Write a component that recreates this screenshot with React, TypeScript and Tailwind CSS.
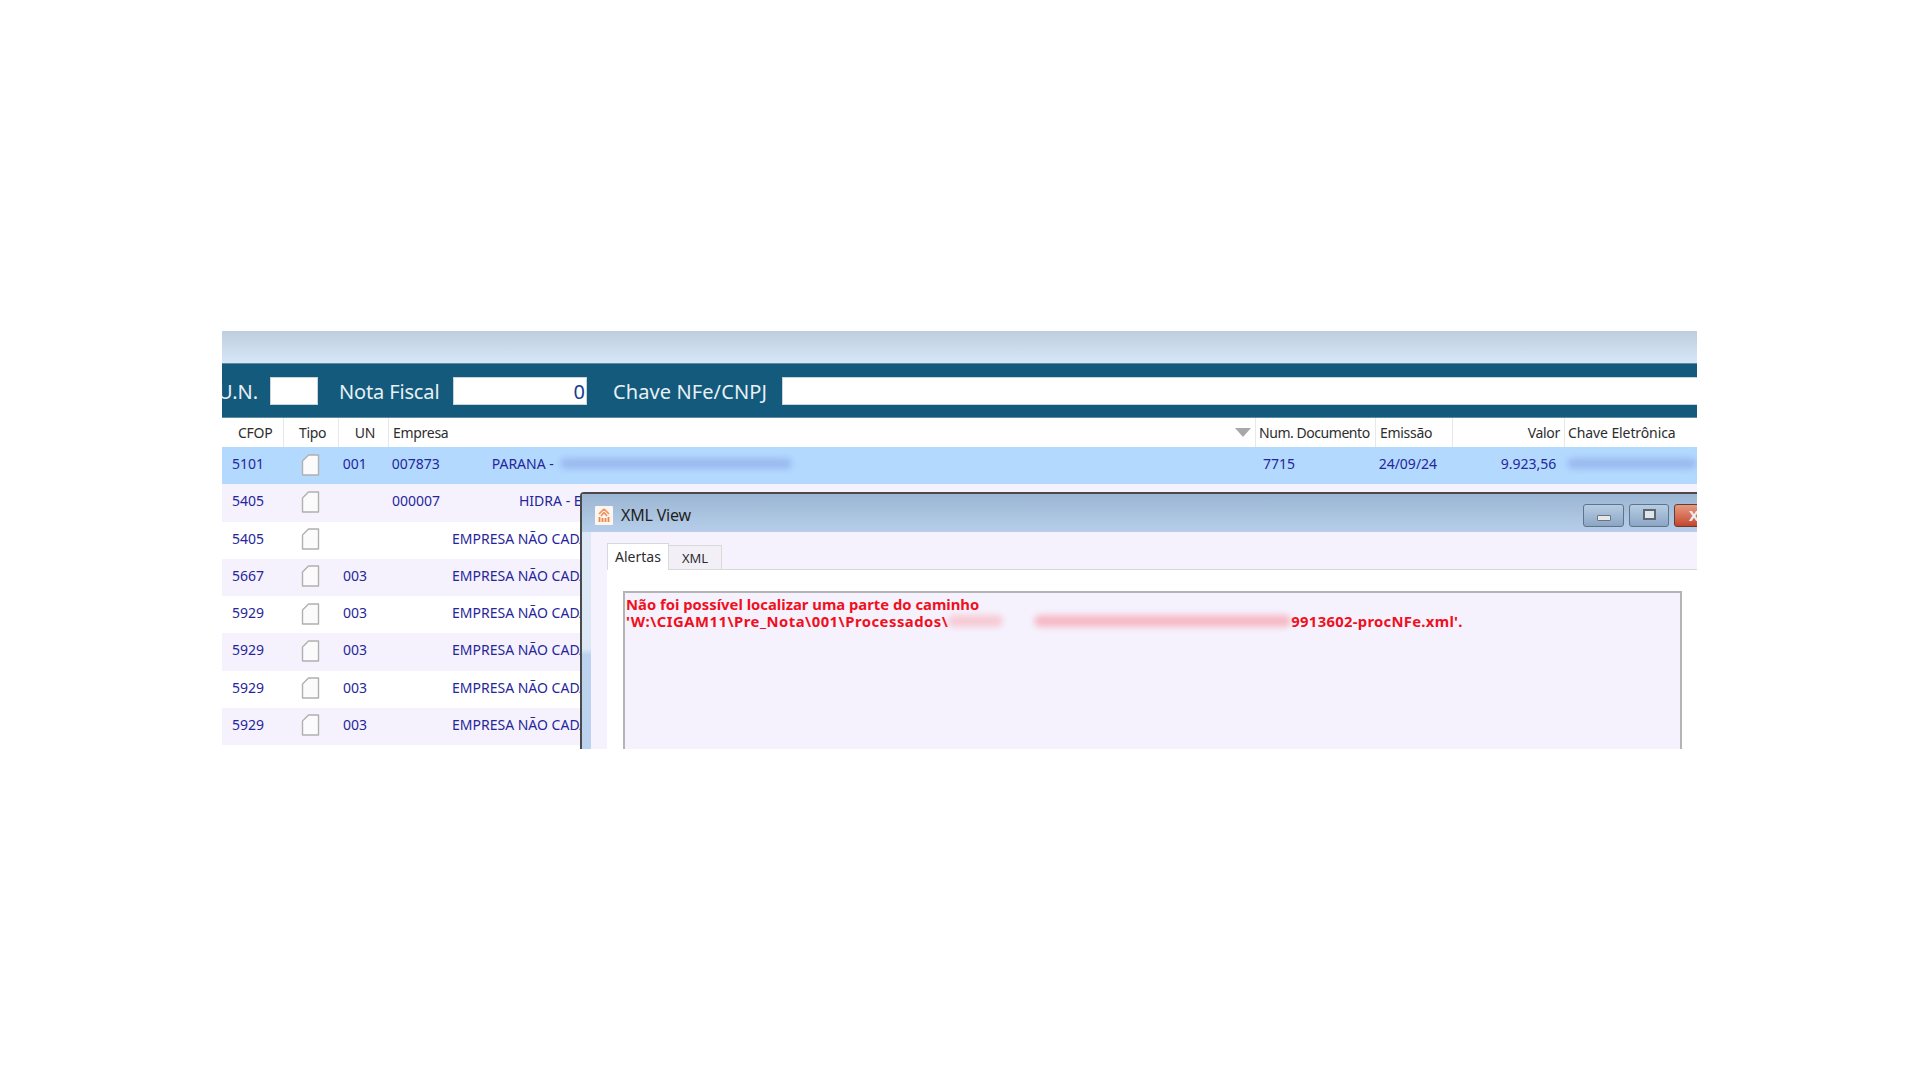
const TAHOMA = "font-['Noto_Sans',sans-serif]";

type Row = {
  cfop: string;
  un: string;
  code: string;
  name: string;
  nameClass: string;
  bg: string;
};

const rows: Row[] = [
  { cfop: "5101", un: "001", code: "007873", name: "PARANA -", nameClass: "ml-[40px]", bg: "bg-[#b3d9ff]" },
  { cfop: "5405", un: "", code: "000007", name: "HIDRA - EMPRESA", nameClass: "ml-[67px]", bg: "bg-[#f5f2fe]" },
  { cfop: "5405", un: "", code: "", name: "EMPRESA NÃO CADASTRADA", nameClass: "ml-0", bg: "bg-white" },
  { cfop: "5667", un: "003", code: "", name: "EMPRESA NÃO CADASTRADA", nameClass: "ml-0", bg: "bg-[#f5f2fe]" },
  { cfop: "5929", un: "003", code: "", name: "EMPRESA NÃO CADASTRADA", nameClass: "ml-0", bg: "bg-white" },
  { cfop: "5929", un: "003", code: "", name: "EMPRESA NÃO CADASTRADA", nameClass: "ml-0", bg: "bg-[#f5f2fe]" },
  { cfop: "5929", un: "003", code: "", name: "EMPRESA NÃO CADASTRADA", nameClass: "ml-0", bg: "bg-white" },
  { cfop: "5929", un: "003", code: "", name: "EMPRESA NÃO CADASTRADA", nameClass: "ml-0", bg: "bg-[#f5f2fe]" },
];

function DocIcon() {
  return (
    <svg width="19" height="22" viewBox="0 0 19 22" className="block">
      <path d="M7.5 1 H17.5 V21 H1.5 V7 Z" fill="#fbfbfb" stroke="#b0b0b0" strokeWidth="1.4" strokeLinejoin="round" />
    </svg>
  );
}

function Logo() {
  return (
    <svg width="18" height="19" viewBox="0 0 18 19" className="block">
      <rect width="18" height="19" rx="1" fill="#fdf6f0" />
      <path d="M9 3 L4 8 M9 3 L14 8 M9 6.5 L6 10 M9 6.5 L12 10" stroke="#f0925a" strokeWidth="1.7" fill="none" />
      <path d="M4.5 11 V16 M7.5 12 V16 M10.5 12 V16 M13.5 11 V16" stroke="#ee8447" strokeWidth="1.8" fill="none" />
    </svg>
  );
}

function HeaderCell({ className, children }: { className: string; children?: React.ReactNode }) {
  return <div className={`flex h-full items-center border-r border-[#e8e8e8] ${className}`}>{children}</div>;
}

export default function App() {
  return (
    <div className={`min-h-screen bg-white pt-[331px] pl-[222px] ${TAHOMA}`}>
      <div className="relative h-[418px] w-[1475px] overflow-hidden bg-white">
        <div className="h-[32px] bg-gradient-to-b from-[#bfcede] to-[#d6e7f9]" />
        <div className="flex h-[55px] items-center border-y border-[#5f8ba0] bg-[#135a7c] pt-[1px] text-[20px] text-[#e8f0f4]">
          <span className="-ml-[4px] w-[52px] pt-[1px] whitespace-nowrap">U.N.</span>
          <div className="h-[28px] w-[48px] border border-[#c9d3d9] bg-white" />
          <span className="ml-[21px] w-[114px] pt-[1px] tracking-[-0.15px] whitespace-nowrap">Nota Fiscal</span>
          <div className="flex h-[28px] w-[134px] items-center justify-end border border-[#c9d3d9] bg-white pt-[1px] pr-[1px] text-[#14408a]">0</div>
          <span className="ml-[26px] w-[169px] pt-[1px] tracking-[0.1px] whitespace-nowrap">Chave NFe/CNPJ</span>
          <div className="h-[28px] flex-1 border-y border-l border-[#c9d3d9] bg-white" />
        </div>

        <div className="flex h-[29px] items-center text-[14px] tracking-[-0.3px] text-[#2d2d2d]">
          <div className="h-full w-[6px]" />
          <HeaderCell className="w-[56px] pl-[10px]">CFOP</HeaderCell>
          <HeaderCell className="w-[55px] pl-[15px]">Tipo</HeaderCell>
          <HeaderCell className="w-[50px] justify-end pr-[13px]">UN</HeaderCell>
          <HeaderCell className="w-[867px] justify-between pr-[4px] pl-[4px]">
            <span>Empresa</span>
            <svg width="16" height="9" viewBox="0 0 16 9" className="block">
              <path d="M0 0 H16 L8 9 Z" fill="#a8a8a8" />
            </svg>
          </HeaderCell>
          <HeaderCell className="w-[120px] pl-[3px] tracking-[-0.45px]">Num. Documento</HeaderCell>
          <HeaderCell className="w-[77px] pl-[4px]">Emissão</HeaderCell>
          <HeaderCell className="w-[112px] justify-end pr-[4px]">Valor</HeaderCell>
          <div className="pl-[3px] tracking-[-0.1px]">Chave Eletrônica</div>
        </div>

        {rows.map((r, i) => (
          <div key={i} className={`flex h-[37.25px] items-center pb-[4px] text-[14px] text-[#26269a] ${r.bg}`}>
            <div className="w-[62px] pl-[10px]">{r.cfop}</div>
            <div className="flex w-[55px] justify-center pt-[2px] pr-[2px]">
              <DocIcon />
            </div>
            <div className="w-[50px] pl-[4px]">{r.un}</div>
            <div className="flex w-[867px] items-center overflow-hidden pl-[3px] whitespace-nowrap">
              <span className="w-[60px] shrink-0">{r.code}</span>
              <span className={r.nameClass}>{r.name}</span>
              {i === 0 && <div className="ml-[6px] h-[11px] w-[232px] rounded-full bg-[#8aa6e4] opacity-60 blur-[3px]" />}
            </div>
            {i === 0 && (
              <>
                <div className="w-[120px] pl-[9px]">7715</div>
                <div className="w-[77px] pl-[5px]">24/09/24</div>
                <div className="w-[112px] pr-[6px] text-right">9.923,56</div>
                <div className="ml-[5px] h-[11px] w-[130px] rounded-full bg-[#8aa6e4] opacity-60 blur-[3px]" />
              </>
            )}
          </div>
        ))}

        {/* XML View window */}
        <div className="absolute top-[161px] left-[358px] flex h-[300px] w-[1140px] flex-col rounded-tl-[4px] border-t-2 border-l-2 border-[#4a4a4a] bg-gradient-to-b from-[#dce8f5] from-[52%] to-[#bbd3ee] to-[54%]">
          <div className="flex h-[38px] shrink-0 items-center bg-gradient-to-b from-[#9bb6d3] to-[#b6cee9] pt-[4px] pr-[6px] pl-[13px]">
            <Logo />
            <span className="ml-[8px] text-[16px] tracking-[-0.2px] whitespace-nowrap text-[#1f1f1f]">XML View</span>
            <div className="ml-auto flex shrink-0 gap-[5px]">
              <div className="flex h-[23px] w-[41px] items-center justify-center rounded-[3px] border border-[#5f7389] bg-gradient-to-b from-[#b7cde4] to-[#8ba6c4]">
                <div className="mt-[5px] h-[6px] w-[14px] rounded-[1px] border border-[#6b7280] bg-[#e8e8e8]" />
              </div>
              <div className="flex h-[23px] w-[40px] items-center justify-center rounded-[3px] border border-[#5f7389] bg-gradient-to-b from-[#b7cde4] to-[#8ba6c4]">
                <div className="mb-[2px] h-[11px] w-[13px] border-2 border-[#5f6670] bg-[#dfe5ec]" />
              </div>
              <div className="flex h-[23px] w-[40px] items-center justify-center rounded-[3px] border border-[#6a3a30] bg-gradient-to-b from-[#e59a82] to-[#c2452c] text-[15px] leading-none font-bold text-[#efefef]">
                X
              </div>
            </div>
          </div>
          <div className="ml-[9px] flex-1 bg-[#f5f2fe] pt-[12px] pl-[16px]">
            <div className="flex h-[26px] items-end border-b border-[#d9d9d9] text-[14px] text-[#2d2d2d]">
              <div className="mb-[-1px] flex h-[27px] w-[62px] items-center justify-center border-x border-t border-[#d9d9d9] bg-white pb-[2px]">Alertas</div>
              <div className="flex h-[24px] w-[53px] items-center justify-center border-t border-r border-[#d9d9d9] bg-[#f2f0f6] pt-[3px] text-[13px]">XML</div>
            </div>
            <div className="h-full bg-white pt-[21px] pl-[16px]">
              <div className="h-full w-[1059px] border-t-2 border-r-2 border-l-2 border-[#b4b4b8] bg-[#f5f2fe] pt-[2px] pl-[1px] text-[14.8px] leading-[18px] font-bold whitespace-nowrap text-[#f01020]">
                <div>Não foi possível localizar uma parte do caminho</div>
                <div className="-mt-[1px] flex items-center">
                  <span className="tracking-[0.5px]">'W:\CIGAM11\Pre_Nota\001\Processados\</span>
                  <div className="h-[12px] w-[55px] rounded-full bg-[#f8b0b8] opacity-60 blur-[3px]" />
                  <div className="ml-[31px] h-[12px] w-[257px] rounded-full bg-[#f7949f] opacity-60 blur-[3px]" />
                  <span className="tracking-[0.3px]">9913602-procNFe.xml'.</span>
                </div>
              </div>
            </div>
          </div>
        </div>
      </div>
    </div>
  );
}
